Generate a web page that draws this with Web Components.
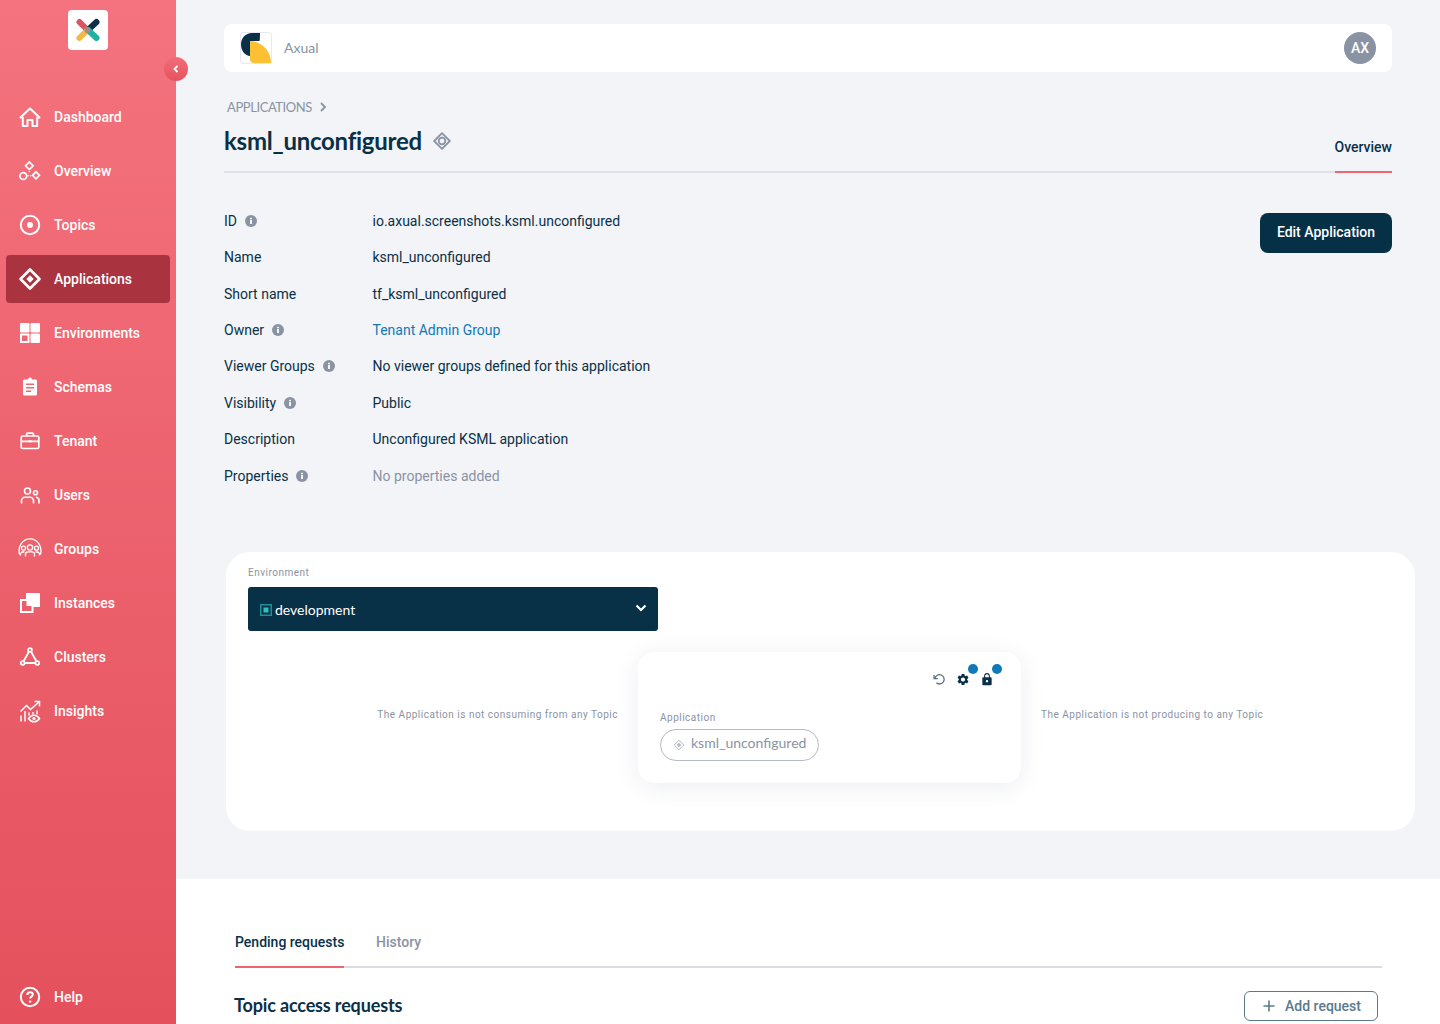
<!DOCTYPE html>
<html lang="en">
<head>
<meta charset="utf-8">
<title>ksml_unconfigured</title>
<style>
  html, body { margin: 0; height: 1024px; overflow: hidden; background: #fff; }
  body { font-family: Roboto, "Liberation Sans", sans-serif; }
</style>
</head>
<body>
<app-shell>
  <side-bar slot="side">
    <nav-item icon="home">Dashboard</nav-item>
    <nav-item icon="overview">Overview</nav-item>
    <nav-item icon="topics">Topics</nav-item>
    <nav-item icon="apps" active>Applications</nav-item>
    <nav-item icon="envs">Environments</nav-item>
    <nav-item icon="schemas">Schemas</nav-item>
    <nav-item icon="tenant">Tenant</nav-item>
    <nav-item icon="users">Users</nav-item>
    <nav-item icon="groups">Groups</nav-item>
    <nav-item icon="instances">Instances</nav-item>
    <nav-item icon="clusters">Clusters</nav-item>
    <nav-item icon="insights">Insights</nav-item>
    <nav-item slot="bottom" icon="help">Help</nav-item>
  </side-bar>

  <top-bar></top-bar>
  <page-head></page-head>

  <detail-list>
    <detail-row label="ID" info>io.axual.screenshots.ksml.unconfigured</detail-row>
    <detail-row label="Name">ksml_unconfigured</detail-row>
    <detail-row label="Short name">tf_ksml_unconfigured</detail-row>
    <detail-row label="Owner" info kind="link">Tenant Admin Group</detail-row>
    <detail-row label="Viewer Groups" info>No viewer groups defined for this application</detail-row>
    <detail-row label="Visibility" info>Public</detail-row>
    <detail-row label="Description">Unconfigured KSML application</detail-row>
    <detail-row label="Properties" info kind="muted">No properties added</detail-row>
  </detail-list>

  <env-card></env-card>

  <requests-panel slot="lower"></requests-panel>
</app-shell>

<script>
(function(){
    const ICONS = {
        home: `<path d="M2.5 12.5 12 3.5l9.500 9h-2.300V21h-4.700v-6h-5v6H4.800v-8.500z" fill="none" stroke="#fff" stroke-width="2" stroke-linejoin="round"/>`,
        overview: `<g fill="none" stroke="#fff" stroke-width="1.700"><path d="m11.300 3 3.800 3.800-3.800 3.800-3.800-3.800z"/><circle cx="5.300" cy="17" r="3.400"/><path d="m18 12.800 3.500 3.500-3.500 3.500-3.500-3.500z"/></g><g fill="#fff"><circle cx="10.300" cy="16.800" r=".8"/><circle cx="12.600" cy="16.800" r=".8"/><circle cx="11.300" cy="12.700" r=".7"/></g>`,
        topics: `<circle cx="12" cy="12" r="9.200" fill="none" stroke="#fff" stroke-width="2"/><circle cx="12" cy="12" r="3" fill="#fff"/>`,
        apps: `<path d="m12 2.500 9.500 9.500-9.500 9.500L2.500 12z" fill="none" stroke="#fff" stroke-width="2.600" stroke-linejoin="round"/><path d="m12 8.300 3.700 3.700-3.700 3.700L8.300 12z" fill="#fff"/>`,
        envs: `<g fill="#fff"><rect x="2" y="2" width="9.500" height="9.500" rx="1.200"/><rect x="12.500" y="2" width="9.500" height="9.500" rx="1.200"/><rect x="12.500" y="12.500" width="9.500" height="9.500" rx="1.200"/></g><rect x="3" y="13.500" width="7.500" height="7.500" fill="none" stroke="#fff" stroke-width="2"/>`,
        schemas: `<path fill="#fff" fill-rule="evenodd" d="M6.500 4.500H10C10.200 3.300 11 2.500 12 2.500s1.800.8 2 2h3.500c.8 0 1.500.7 1.500 1.500v13c0 .8-.7 1.500-1.500 1.500h-11C5.700 20.500 5 19.800 5 19V6c0-.8.7-1.500 1.500-1.500zM8 8.500v1.500h8V8.500zm0 3.500v1.500h8V12zm0 3.500V17h5v-1.500z"/>`,
        tenant: `<g fill="none" stroke="#fff" stroke-width="1.700"><rect x="3.200" y="7" width="17.600" height="12.500" rx="1.500"/><path d="M8.500 7V5.500c0-.8.600-1.300 1.300-1.300h4.400c.7 0 1.300.5 1.300 1.300V7M3.200 12.300h17.600"/></g><rect x="10.500" y="11.300" width="3" height="2" fill="#fff"/>`,
        users: `<g fill="none" stroke="#fff" stroke-width="1.600"><circle cx="9.500" cy="8" r="3"/><path d="M3.500 20.500v-2.800c0-2 1.600-3.500 3.500-3.500h5c1.900 0 3.500 1.500 3.500 3.500v2.800"/><circle cx="17.500" cy="9.800" r="2"/><path d="M18 14.300c1.600.2 3 1.500 3 3.200v3"/></g>`,
        groups: `<g fill="none" stroke="#fff" stroke-width="1.300"><path d="M1.500 17.500C-.5 9.500 4.500 1.800 12 1.800s12.500 7.700 10.500 15.700"/><circle cx="12" cy="10.500" r="2.600"/><circle cx="5.500" cy="11.200" r="2"/><circle cx="18.500" cy="11.200" r="2"/><path d="M7.500 19.500v-2.200c0-1.400 1-2.400 2.300-2.400h4.400c1.300 0 2.300 1 2.300 2.400v2.200"/><path d="M2.500 18.500v-1.300c0-1.300 1-2.200 2.200-2.200h1.800M21.500 18.500v-1.300c0-1.300-1-2.200-2.200-2.200h-1.800"/></g>`,
        instances: `<path fill="#fff" d="M8 2h12.800c.7 0 1.200.5 1.200 1.200V15c0 .6-.4 1-1 1h-6V8H8z"/><rect x="3" y="9" width="11.500" height="12" fill="none" stroke="#fff" stroke-width="2"/><rect x="8.500" y="9.500" width="5.500" height="5.500" fill="#fff"/>`,
        clusters: `<g fill="none" stroke="#fff" stroke-width="1.800"><path d="m10.900 6.800-5.300 9.400M13.100 6.800l5.300 9.400M6.700 18h10.600"/><circle cx="12" cy="5" r="1.900"/><circle cx="4.700" cy="18" r="1.900"/><circle cx="19.300" cy="18" r="1.900"/></g>`,
        insights: `<g fill="none" stroke="#fff" stroke-width="1.500"><path d="M2.500 12.500 8.500 6.500l4 4 8.500-7.500M16.500 2.500H21.500V7.500"/><path d="M3 22.500v-6M7 22.500V12M11 16.500V13.500M15 13v2.500M19 11.500v4"/><path d="M10.500 19.500c1.500-2.300 3.300-3.300 5.500-3.300s4 1 5.500 3.300c-1.500 2.300-3.300 3.300-5.500 3.300s-4-1-5.500-3.300z"/></g><circle cx="16" cy="19.500" r="1.600" fill="#fff"/>`,
        help: `<circle cx="12" cy="12" r="9.200" fill="none" stroke="#fff" stroke-width="2"/><path d="M9.300 10c0-1.700 1.200-2.700 2.800-2.700s2.700 1 2.700 2.300c0 2-2.700 2-2.700 4" fill="none" stroke="#fff" stroke-width="2"/><circle cx="12.100" cy="16.600" r="1.200" fill="#fff"/>`
    }

    class AppShell extends HTMLElement {
        connectedCallback() {
            this.attachShadow({mode: "open"})
            this.shadowRoot.innerHTML = `
                <style>
                    :host { display: flex; width: 1440px; height: 1024px; overflow: hidden; }
                    .col { flex: 1; min-width: 0; display: flex; flex-direction: column; }
                    .upper { height: 879px; box-sizing: border-box; background: #f2f4f8; padding: 24px 48px 0; }
                </style>
                <slot name="side"></slot>
                <div class="col">
                    <div class="upper"><slot></slot></div>
                    <slot name="lower"></slot>
                </div>
            `
        }
    }

    class SideBar extends HTMLElement {
        connectedCallback() {
            this.attachShadow({mode: "open"})
            this.shadowRoot.innerHTML = `
                <style>
                    :host {
                        display: flex;
                        flex-direction: column;
                        position: relative;
                        flex: none;
                        width: 176px;
                        height: 1024px;
                        box-sizing: border-box;
                        padding: 10px 6px 3px;
                        background: linear-gradient(180deg, #f4737e 0%, #e4515d 100%);
                    }
                    .logo {
                        align-self: center;
                        width: 40px;
                        height: 40px;
                        background: #fff;
                        border-radius: 4px;
                        margin-bottom: 43px;
                    }
                    .logo svg { display: block; }
                    nav { display: flex; flex-direction: column; gap: 6px; }
                    .bottom { margin-top: auto; }
                    .toggle {
                        position: absolute;
                        left: 164px;
                        top: 57px;
                        width: 24px;
                        height: 24px;
                        border-radius: 50%;
                        background: linear-gradient(180deg, #f16d78, #e6535f);
                        display: flex;
                        align-items: center;
                        justify-content: center;
                    }
                </style>
                <div class="logo">
                    <svg width="40" height="40" viewBox="0 0 40 40" fill="none" stroke-width="6" stroke-linecap="round">
                        <path d="M11.500 12 19.500 20" stroke="#d9555f"/>
                        <path d="M28.500 12 20 20" stroke="#0b3047"/>
                        <path d="M11.500 28 19.500 20" stroke="#f4b942"/>
                        <path d="M28.500 28 20 20" stroke="#20b2a0"/>
                        <circle cx="19.500" cy="20" r="3" fill="#9a8f85" stroke="none"/>
                    </svg>
                </div>
                <div class="toggle">
                    <svg width="10" height="10" viewBox="0 0 10 10"><path d="M6.500 2 3.500 5l3 3" fill="none" stroke="#fff" stroke-width="1.800"/></svg>
                </div>
                <nav><slot></slot></nav>
                <div class="bottom"><slot name="bottom"></slot></div>
            `
        }
    }

    class NavItem extends HTMLElement {
        connectedCallback() {
            this.attachShadow({mode: "open"})
            const icon = ICONS[this.getAttribute("icon")] ?? ""
            this.shadowRoot.innerHTML = `
                <style>
                    :host {
                        display: flex;
                        align-items: center;
                        gap: 12px;
                        height: 48px;
                        padding-left: 12px;
                        border-radius: 4px;
                        font: 500 14px Roboto, sans-serif;
                        color: #fff;
                    }
                    :host([active]) { background: #a9333f; }
                    svg { flex: none; display: block; }
                </style>
                <svg width="24" height="24" viewBox="0 0 24 24">${icon}</svg>
                <span><slot></slot></span>
            `
        }
    }

    class TopBar extends HTMLElement {
        connectedCallback() {
            this.attachShadow({mode: "open"})
            this.shadowRoot.innerHTML = `
                <style>
                    :host {
                        display: flex;
                        align-items: center;
                        height: 48px;
                        box-sizing: border-box;
                        padding: 0 16px;
                        background: #fff;
                        border-radius: 8px;
                    }
                    .mark {
                        width: 32px;
                        height: 32px;
                        margin-right: 12px;
                        box-sizing: border-box;
                        border: 1px solid #e6e8f2;
                        border-radius: 3px;
                    }
                    .mark svg { display: block; }
                    .name { font: 400 14px Lato, sans-serif; color: #8a93a3; margin-bottom: 2px; }
                    .avatar {
                        margin-left: auto;
                        width: 32px;
                        height: 32px;
                        border-radius: 50%;
                        background: #8a93a3;
                        color: #fff;
                        font: 500 14px Roboto, sans-serif;
                        display: flex;
                        align-items: center;
                        justify-content: center;
                    }
                </style>
                <div class="mark">
                    <svg width="30" height="30" viewBox="0 0 30 30">
                        <path d="M19 0H11C4.500 0 0 5 0 11.500 0 18 4.500 23 9 23V8h9.500c.5-2 .5-5 .5-8z" fill="#0a3047"/>
                        <path d="M9 8c10 0 21 8.500 21 22H13c-2.500 0-4-1.500-4-4z" fill="#fcc133"/>
                    </svg>
                </div>
                <span class="name">Axual</span>
                <div class="avatar">AX</div>
            `
        }
    }

    class PageHead extends HTMLElement {
        connectedCallback() {
            this.attachShadow({mode: "open"})
            this.shadowRoot.innerHTML = `
                <style>
                    :host {
                        display: flex;
                        align-items: flex-end;
                        justify-content: space-between;
                        margin-top: 25px;
                        height: 74px;
                        border-bottom: 2px solid #dfdfef;
                        box-sizing: content-box;
                    }
                    .crumb {
                        display: flex;
                        align-items: center;
                        gap: 7px;
                        padding-left: 3px;
                        height: 20px;
                        font: 400 13px Lato, sans-serif;
                        letter-spacing: -0.42px;
                        color: #8a93a3;
                    }
                    .left { align-self: flex-start; }
                    h1 {
                        display: flex;
                        align-items: center;
                        gap: 11px;
                        margin: 4px 0 0;
                        height: 40px;
                        font: 700 24px/40px Lato, sans-serif;
                        letter-spacing: -0.25px;
                        color: #0a3047;
                    }
                    .tab {
                        font: 500 14px Roboto, sans-serif;
                        color: #0a3047;
                        height: 32px;
                        margin-bottom: -2px;
                        border-bottom: 2px solid #f0646f;
                        box-sizing: content-box;
                    }
                    svg { display: block; }
                </style>
                <div class="left">
                    <div class="crumb">APPLICATIONS
                        <svg width="8" height="10" viewBox="0 0 8 10"><path d="m2 1 4 4-4 4" fill="none" stroke="#8a93a3" stroke-width="1.800"/></svg>
                    </div>
                    <h1>ksml_unconfigured
                        <svg width="18" height="18" viewBox="0 0 18 18" fill="none" stroke="#8a93a3">
                            <path d="m9 1.200 7.800 7.800L9 16.800 1.200 9z" stroke-width="1.800" stroke-linejoin="round"/>
                            <circle cx="9" cy="9" r="3.300" stroke-width="1.800"/>
                        </svg>
                    </h1>
                </div>
                <div class="tab">Overview</div>
            `
        }
    }

    class DetailList extends HTMLElement {
        connectedCallback() {
            this.attachShadow({mode: "open"})
            this.shadowRoot.innerHTML = `
                <style>
                    :host { display: flex; justify-content: space-between; margin-top: 29.700px; }
                    .rows { display: flex; flex-direction: column; }
                    button {
                        align-self: flex-start;
                        margin-top: 10.800px;
                        width: 132px;
                        height: 40px;
                        padding: 0 0 2px;
                        border: 0;
                        border-radius: 8px;
                        background: #063046;
                        color: #fff;
                        font: 500 14px Roboto, sans-serif;
                    }
                </style>
                <div class="rows"><slot></slot></div>
                <button>Edit Application</button>
            `
        }
    }

    class DetailRow extends HTMLElement {
        connectedCallback() {
            this.attachShadow({mode: "open"})
            const info = this.hasAttribute("info") ? `
                <svg width="12" height="12" viewBox="0 0 12 12">
                    <circle cx="6" cy="6" r="6" fill="#8a93a3"/>
                    <rect x="5.100" y="5" width="1.800" height="4" fill="#fff"/>
                    <rect x="5.100" y="2.800" width="1.800" height="1.500" fill="#fff"/>
                </svg>` : ""
            this.shadowRoot.innerHTML = `
                <style>
                    :host {
                        display: grid;
                        grid-template-columns: 148.500px auto;
                        align-items: center;
                        height: 36.400px;
                        font: 400 14px Roboto, sans-serif;
                        color: #0a3047;
                    }
                    .label { display: flex; align-items: center; gap: 8px; }
                    :host([kind="link"]) .value { color: #1079b8; }
                    :host([kind="muted"]) .value { color: #8a93a3; }
                </style>
                <div class="label">${this.getAttribute("label")}${info}</div>
                <div class="value"><slot></slot></div>
            `
        }
    }

    class EnvCard extends HTMLElement {
        connectedCallback() {
            this.attachShadow({mode: "open"})
            this.shadowRoot.innerHTML = `
                <style>
                    :host {
                        display: block;
                        box-sizing: border-box;
                        height: 279px;
                        margin: 58.300px -23px 0 2px;
                        padding: 14px 0 0 22px;
                        background: #fff;
                        border-radius: 24px;
                    }
                    .small {
                        font: 400 10px/14px Roboto, sans-serif;
                        letter-spacing: .5px;
                        color: #8a93a3;
                    }
                    .select {
                        display: flex;
                        align-items: center;
                        box-sizing: border-box;
                        width: 410px;
                        height: 44px;
                        margin-top: 7px;
                        padding: 0 11px 0 12px;
                        background: #083046;
                        border-radius: 3px;
                        color: #fff;
                        font: 400 14px Lato, sans-serif;
                    }
                    .select .env { margin: 2px 3px 0 0; }
                    .select .chev { margin: -2px 0 0 auto; }
                    svg { display: block; }
                    .flow {
                        display: grid;
                        grid-template-columns: 390px 383px auto;
                        margin-top: 21px;
                    }
                    .note { align-self: center; margin-bottom: 5px; }
                    .note.left { text-align: right; padding-right: 20px; }
                    .note.right { padding-left: 20px; }
                    .app {
                        position: relative;
                        box-sizing: border-box;
                        height: 131px;
                        padding: 17px 22px 0;
                        background: #fff;
                        border-radius: 16px;
                        box-shadow: 0 4px 24px rgba(30, 40, 90, .08);
                    }
                    .actions {
                        display: flex;
                        justify-content: flex-end;
                        gap: 10px;
                        height: 20px;
                        margin-right: 5px;
                    }
                    .act { position: relative; width: 14px; height: 20px; display: flex; align-items: center; justify-content: center; }
                    .act i {
                        position: absolute;
                        top: -5px;
                        left: 12px;
                        width: 10px;
                        height: 10px;
                        border-radius: 50%;
                        background: #1079b8;
                    }
                    .app .small { margin-top: 22px; }
                    .chip {
                        display: inline-flex;
                        align-items: center;
                        gap: 5px;
                        box-sizing: border-box;
                        height: 32px;
                        margin-top: 4px;
                        padding: 0 12px 6px 13px;
                        border: 1px solid #b5bac6;
                        border-radius: 16px;
                        font: 400 14px Lato, sans-serif;
                        color: #8a93a3;
                    }
                    .chip svg { margin-top: 6px; margin-left: -1px; margin-right: 1px; }
                </style>
                <div class="small">Environment</div>
                <div class="select">
                    <svg class="env" width="12" height="12" viewBox="0 0 12 12">
                        <rect x=".75" y=".75" width="10.500" height="10.500" fill="none" stroke="#1d8f9a" stroke-width="1.500"/>
                        <rect x="3.500" y="3.500" width="5" height="5" fill="#2cc0bb"/>
                    </svg>
                    development
                    <svg class="chev" width="12" height="10" viewBox="0 0 12 10"><path d="M1.500 2.500 6 7l4.500-4.500" fill="none" stroke="#fff" stroke-width="2.200"/></svg>
                </div>
                <div class="flow">
                    <div class="small note left">The Application is not consuming from any Topic</div>
                    <div class="app">
                        <div class="actions">
                            <div class="act">
                                <svg width="14" height="14" viewBox="0 0 24 24" fill="none" stroke="#5b6f7f" stroke-width="2.200"><path d="M5 11a8 8 0 1 1 2.500 7.500"/><path d="M3.500 5v6.500H10"/></svg>
                            </div>
                            <div class="act">
                                <svg width="17" height="17" viewBox="0 0 24 24"><path fill="#0a3047" d="M19.140 12.940c.04-.3.06-.61.06-.94 0-.32-.02-.64-.07-.94l2.030-1.580c.18-.14.23-.41.12-.61l-1.920-3.320c-.12-.22-.37-.29-.59-.22l-2.390.96c-.5-.38-1.030-.7-1.620-.94l-.36-2.540c-.04-.24-.24-.41-.48-.41h-3.840c-.24 0-.43.17-.47.41l-.36 2.540c-.59.24-1.130.57-1.620.94l-2.390-.96c-.22-.08-.47 0-.59.22L2.740 8.870c-.12.21-.08.47.12.61l2.030 1.580c-.05.3-.09.63-.09.94s.02.64.07.94l-2.030 1.580c-.18.14-.23.41-.12.61l1.920 3.320c.12.22.37.29.59.22l2.390-.96c.5.38 1.030.7 1.620.94l.36 2.540c.05.24.24.41.48.41h3.840c.24 0 .44-.17.47-.41l.36-2.540c.59-.24 1.130-.56 1.620-.94l2.390.96c.22.08.47 0 .59-.22l1.920-3.320c.12-.22.07-.47-.12-.61l-2.010-1.580zM12 15.600c-1.980 0-3.600-1.620-3.600-3.600s1.620-3.600 3.600-3.600 3.600 1.620 3.600 3.600-1.620 3.600-3.600 3.600z"/></svg>
                                <i></i>
                            </div>
                            <div class="act">
                                <svg width="15" height="15" viewBox="0 0 24 24"><path fill="#0a3047" d="M18 8h-1V6c0-2.760-2.240-5-5-5S7 3.240 7 6v2H6c-1.100 0-2 .9-2 2v10c0 1.100.9 2 2 2h12c1.100 0 2-.9 2-2V10c0-1.100-.9-2-2-2zm-6 9c-1.100 0-2-.9-2-2s.9-2 2-2 2 .9 2 2-.9 2-2 2zm3.100-9H8.900V6c0-1.710 1.390-3.100 3.100-3.100 1.710 0 3.100 1.390 3.100 3.100v2z"/></svg>
                                <i></i>
                            </div>
                        </div>
                        <div class="small">Application</div>
                        <div class="chip">
                            <svg width="12" height="12" viewBox="0 0 12 12" fill="none" stroke="#b5bac6"><path d="m6 1.200 4.800 4.800L6 10.800 1.200 6z"/><path d="m6 4.200 1.800 1.800L6 7.800 4.200 6z" fill="#b5bac6"/></svg>
                            ksml_unconfigured
                        </div>
                    </div>
                    <div class="small note right">The Application is not producing to any Topic</div>
                </div>
            `
        }
    }

    class RequestsPanel extends HTMLElement {
        connectedCallback() {
            this.attachShadow({mode: "open"})
            this.shadowRoot.innerHTML = `
                <style>
                    :host {
                        display: block;
                        flex: 1;
                        background: #fff;
                        padding: 44px 58px 0 59px;
                    }
                    .tabs {
                        display: flex;
                        gap: 32px;
                        height: 43px;
                        border-bottom: 2px solid #d9dde2;
                        font: 500 14px/38px Roboto, sans-serif;
                    }
                    .tabs div { height: 43px; color: #8a93a3; }
                    .tabs .on { color: #0a3047; width: 109px; border-bottom: 2px solid #f0646f; white-space: nowrap; }
                    .head {
                        display: flex;
                        align-items: center;
                        justify-content: space-between;
                        margin-top: 22px;
                        padding-right: 4px;
                    }
                    h2 {
                        margin: 0 0 2px -1px;
                        font: 700 18px/30px Lato, sans-serif;
                        letter-spacing: -0.15px;
                        color: #0a3047;
                    }
                    button {
                        display: flex;
                        align-items: center;
                        justify-content: center;
                        gap: 10px;
                        box-sizing: border-box;
                        width: 134px;
                        height: 30px;
                        padding: 0 0 0 2px;
                        background: #fff;
                        border: 1px solid #5c7a8c;
                        border-radius: 6px;
                        color: #5c7a8c;
                        font: 500 14px Roboto, sans-serif;
                    }
                </style>
                <div class="tabs">
                    <div class="on">Pending requests</div>
                    <div>History</div>
                </div>
                <div class="head">
                    <h2>Topic access requests</h2>
                    <button>
                        <svg width="12" height="12" viewBox="0 0 12 12"><path d="M6 .5v11M.5 6h11" stroke="#5c7a8c" stroke-width="1.600"/></svg>
                        Add request
                    </button>
                </div>
            `
        }
    }

    customElements.define('app-shell', AppShell)
    customElements.define('side-bar', SideBar)
    customElements.define('nav-item', NavItem)
    customElements.define('top-bar', TopBar)
    customElements.define('page-head', PageHead)
    customElements.define('detail-list', DetailList)
    customElements.define('detail-row', DetailRow)
    customElements.define('env-card', EnvCard)
    customElements.define('requests-panel', RequestsPanel)
})()
</script>
</body>
</html>
